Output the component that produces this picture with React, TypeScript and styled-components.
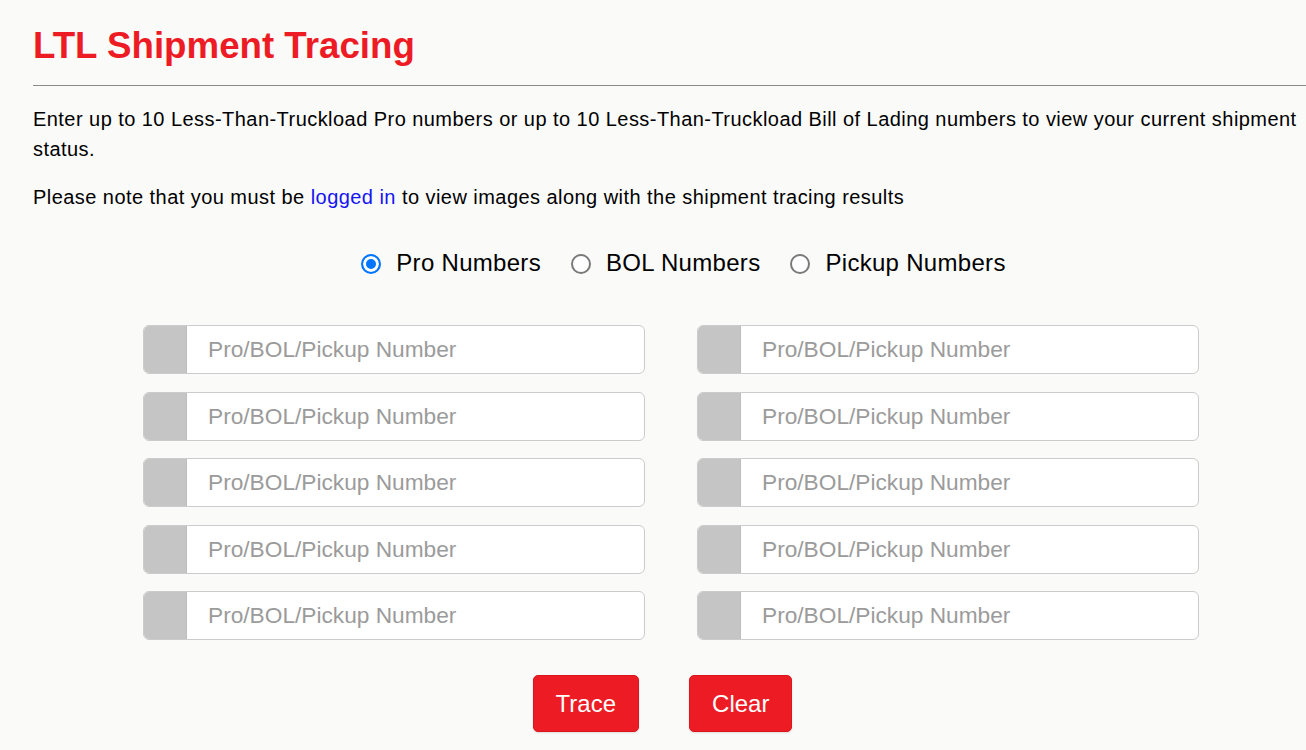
import React, { useState } from 'react';
import styled, { createGlobalStyle } from 'styled-components';

const colors = {
  red: '#ed1c24',
  text: '#111111',
  link: '#1414f5',
  page: '#fafaf9',
  rule: '#8a8a8a',
  border: '#cccccc',
  addon: '#c5c5c5',
  placeholder: '#9b9b9b',
  radio: '#0075ff',
};

const GlobalStyle = createGlobalStyle`
  html, body {
    margin: 0;
    padding: 0;
    background: ${colors.page};
    font-family: 'Liberation Sans', Arial, sans-serif;
    color: ${colors.text};
    overflow-x: hidden;
  }
  * { box-sizing: border-box; }
`;

const Page = styled.main`
  padding: 24px 0 20px 33px;
`;

const Title = styled.h1`
  margin: 0;
  font-size: 36.7px;
  line-height: 43px;
  font-weight: 700;
  color: ${colors.red};
`;

const Rule = styled.hr`
  margin: 18px 0 18px;
  border: 0;
  border-top: 1px solid ${colors.rule};
  height: 0;
`;

const Paragraph = styled.p`
  margin: 0 0 18px;
  font-size: 20px;
  letter-spacing: 0.45px;
  line-height: 30px;
  color: #000;
`;

const Link = styled.a`
  color: ${colors.link};
  text-decoration: none;
`;

const Form = styled.form`
  padding-left: 3px;
`;

const RadioGroup = styled.div`
  display: flex;
  justify-content: center;
  gap: 30px;
  padding-left: 25px;
  margin-top: 37px;
`;

const RadioOption = styled.label`
  display: flex;
  align-items: center;
  gap: 15px;
  font-size: 24px;
  letter-spacing: 0.3px;
  line-height: 28px;
  color: #000;
  cursor: pointer;
`;

const RadioInput = styled.input`
  appearance: none;
  margin: 0;
  width: 20px;
  height: 20px;
  border-radius: 50%;
  border: 2px solid #7a7a7a;
  background: #fff;
  position: relative;
  top: 1px;

  &:checked {
    border-color: ${colors.radio};
    background: ${colors.radio};
    box-shadow: inset 0 0 0 3px #fff;
  }
`;

const FieldGrid = styled.div`
  display: grid;
  grid-template-columns: repeat(2, 502px);
  column-gap: 52px;
  row-gap: 17.5px;
  justify-content: center;
  margin-top: 48px;
`;

const FieldGroup = styled.div`
  display: flex;
  height: 49px;
  border: 1px solid ${colors.border};
  border-radius: 6px;
  background: #fff;
  overflow: hidden;
`;

const Addon = styled.span`
  flex: 0 0 43px;
  background: ${colors.addon};
  border-right: 1px solid #bdbdbd;
`;

const FieldInput = styled.input`
  flex: 1;
  min-width: 0;
  border: 0;
  outline: none;
  background: transparent;
  padding: 0 20px 0 21px;
  font-family: 'Liberation Sans', Arial, sans-serif;
  font-size: 22.7px;
  color: #333;

  &::placeholder {
    color: ${colors.placeholder};
  }
`;

const Actions = styled.div`
  display: flex;
  justify-content: center;
  gap: 50px;
  padding-right: 17px;
  margin-top: 35px;
`;

const Button = styled.button`
  height: 57px;
  padding: 0 22px;
  border: 1px solid #d9161e;
  border-radius: 5px;
  background: ${colors.red};
  color: #fff;
  font-family: 'Liberation Sans', Arial, sans-serif;
  font-size: 24px;
  cursor: pointer;
  box-shadow: 0 1px 2px rgba(0, 0, 0, 0.12);
`;

const modes = ['Pro Numbers', 'BOL Numbers', 'Pickup Numbers'];

export default function App() {
  const [mode, setMode] = useState(modes[0]);
  const [values, setValues] = useState<string[]>(Array(10).fill(''));

  const update = (i: number, v: string) => {
    const next = [...values];
    next[i] = v;
    setValues(next);
  };

  return (
    <>
      <GlobalStyle />
      <Page>
        <Title>LTL Shipment Tracing</Title>
        <Rule />
        <Paragraph>
          Enter up to 10 Less-Than-Truckload Pro numbers or up to 10 Less-Than-Truckload Bill of
          Lading numbers to view your current shipment status.
        </Paragraph>
        <Paragraph>
          Please note that you must be <Link href="#">logged in</Link> to view images along with
          the shipment tracing results
        </Paragraph>
        <Form onSubmit={(e) => e.preventDefault()}>
          <RadioGroup>
            {modes.map((m) => (
              <RadioOption key={m}>
                <RadioInput
                  type="radio"
                  name="mode"
                  checked={mode === m}
                  onChange={() => setMode(m)}
                />
                {m}
              </RadioOption>
            ))}
          </RadioGroup>
          <FieldGrid>
            {values.map((v, i) => (
              <FieldGroup key={i}>
                <Addon />
                <FieldInput
                  placeholder="Pro/BOL/Pickup Number"
                  value={v}
                  onChange={(e) => update(i, e.target.value)}
                />
              </FieldGroup>
            ))}
          </FieldGrid>
          <Actions>
            <Button type="submit">Trace</Button>
            <Button type="button" onClick={() => setValues(Array(10).fill(''))}>
              Clear
            </Button>
          </Actions>
        </Form>
      </Page>
    </>
  );
}
